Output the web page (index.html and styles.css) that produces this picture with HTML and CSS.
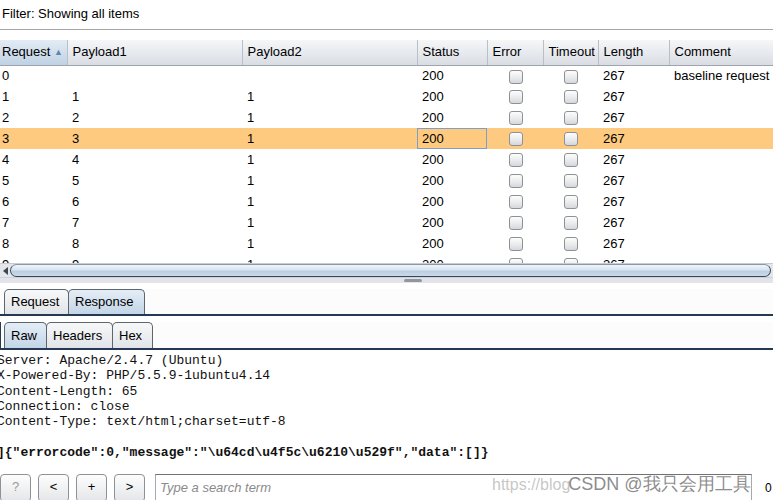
FILE: index.html
```html
<!DOCTYPE html>
<html>
<head>
<meta charset="utf-8">
<link rel="stylesheet" href="styles.css">
</head>
<body>
<div class="page">
  <div class="filter">Filter: Showing all items</div>
  <div class="grid-wrap">
    <table class="grid">
      <colgroup>
        <col class="c-req"><col class="c-p1"><col class="c-p2"><col class="c-st"><col class="c-err"><col class="c-to"><col class="c-len"><col class="c-com">
      </colgroup>
      <thead>
        <tr>
          <th class="sorted">Request <span class="sort-arrow">▲</span></th>
          <th>Payload1</th><th>Payload2</th><th>Status</th><th>Error</th><th>Timeout</th><th>Length</th><th>Comment</th>
        </tr>
      </thead>
      <tbody>
        <tr><td class="first">0</td><td></td><td></td><td>200</td><td class="cb"><span class="box"></span></td><td class="cb"><span class="box"></span></td><td>267</td><td>baseline request</td></tr>
        <tr><td class="first">1</td><td>1</td><td>1</td><td>200</td><td class="cb"><span class="box"></span></td><td class="cb"><span class="box"></span></td><td>267</td><td></td></tr>
        <tr><td class="first">2</td><td>2</td><td>1</td><td>200</td><td class="cb"><span class="box"></span></td><td class="cb"><span class="box"></span></td><td>267</td><td></td></tr>
        <tr class="sel"><td class="first">3</td><td>3</td><td>1</td><td class="focus">200</td><td class="cb"><span class="box"></span></td><td class="cb"><span class="box"></span></td><td>267</td><td></td></tr>
        <tr><td class="first">4</td><td>4</td><td>1</td><td>200</td><td class="cb"><span class="box"></span></td><td class="cb"><span class="box"></span></td><td>267</td><td></td></tr>
        <tr><td class="first">5</td><td>5</td><td>1</td><td>200</td><td class="cb"><span class="box"></span></td><td class="cb"><span class="box"></span></td><td>267</td><td></td></tr>
        <tr><td class="first">6</td><td>6</td><td>1</td><td>200</td><td class="cb"><span class="box"></span></td><td class="cb"><span class="box"></span></td><td>267</td><td></td></tr>
        <tr><td class="first">7</td><td>7</td><td>1</td><td>200</td><td class="cb"><span class="box"></span></td><td class="cb"><span class="box"></span></td><td>267</td><td></td></tr>
        <tr><td class="first">8</td><td>8</td><td>1</td><td>200</td><td class="cb"><span class="box"></span></td><td class="cb"><span class="box"></span></td><td>267</td><td></td></tr>
        <tr><td class="first">9</td><td>9</td><td>1</td><td>200</td><td class="cb"><span class="box"></span></td><td class="cb"><span class="box"></span></td><td>267</td><td></td></tr>
      </tbody>
    </table>
  </div>
  <div class="hscroll">
    <div class="arrow-btn"><span class="tri-left"></span></div>
    <div class="thumb"></div>
  </div>
  <div class="splitter"><span class="grip"></span></div>
  <div class="tabs outer">
    <div class="tab">Request</div>
    <div class="tab active">Response</div>
  </div>
  <div class="tabs inner">
    <div class="tab active">Raw</div>
    <div class="tab">Headers</div>
    <div class="tab">Hex</div>
  </div>
  <pre class="raw">Server: Apache/2.4.7 (Ubuntu)
X-Powered-By: PHP/5.5.9-1ubuntu4.14
Content-Length: 65
Connection: close
Content-Type: text/html;charset=utf-8

<b>]{"errorcode":0,"message":"\u64cd\u4f5c\u6210\u529f","data":[]}</b></pre>
  <div class="bottom">
    <button class="btn disabled">?</button>
    <button class="btn">&lt;</button>
    <button class="btn">+</button>
    <button class="btn">&gt;</button>
    <div class="search">Type a search term</div>
    <div class="count">0</div>
  </div>
  <div class="watermark"><span class="wm-url">https://blog</span><span class="wm-name">CSDN @我只会用工具</span></div>
</div>
</body>
</html>
```

FILE: styles.css
```css
* { box-sizing: border-box; }
html, body { margin: 0; padding: 0; background: #fff; }
.page {
  width: 773px;
  height: 500px;
  overflow: hidden;
  position: relative;
  display: flex;
  flex-direction: column;
  font-family: "Liberation Sans", Arial, sans-serif;
  font-size: 13px;
  color: #000;
}
.filter {
  height: 30px;
  flex: none;
  padding: 6px 0 0 2px;
  border-bottom: 1px solid #a7a7a7;
  background: #fff;
}
.grid-wrap {
  flex: none;
  height: 223px;
  margin-top: 10px;
  overflow: hidden;
}
.grid {
  width: 773px;
  table-layout: fixed;
  border-collapse: collapse;
}
.c-req { width: 67px; }
.c-p1 { width: 175px; }
.c-p2 { width: 175px; }
.c-st { width: 70px; }
.c-err { width: 56px; }
.c-to { width: 55px; }
.c-len { width: 71px; }
.c-com { width: 104px; }
.grid th {
  height: 25px;
  padding: 0 0 1px 5px;
  text-align: left;
  font-weight: normal;
  white-space: nowrap;
  background: linear-gradient(#f5f6f8, #e4e7ec 60%, #d9dde3);
  border-right: 1px solid #b9bfc8;
  border-bottom: 1px solid #9da4ad;
}
.grid th:last-child { border-right: none; }
.grid th.sorted {
  padding-left: 2px;
  background: linear-gradient(#e3ecf5, #cddcea 60%, #bfd1e3);
}
.sort-arrow { font-size: 9px; color: #5b86b4; vertical-align: 1px; }
.grid td {
  height: 21px;
  padding: 0 0 0 5px;
  white-space: nowrap;
  overflow: hidden;
}
.grid td.first { padding-left: 2px; }
.grid td.cb { padding: 0; text-align: center; }
.grid tr.sel td { background: #fdca80; }
.grid td.focus { box-shadow: inset 0 0 0 1px #7a9fcc; }
.box {
  display: inline-block;
  width: 14px;
  height: 14px;
  vertical-align: middle;
  border: 1px solid #8e9298;
  border-radius: 3px;
  background: linear-gradient(#fdfdfd, #e9eaec 55%, #d5d7db);
  margin-left: 1px;
}
.hscroll {
  flex: none;
  height: 14px;
  display: flex;
  background: #e3e6ea;
  border-top: 1px solid #c8ccd2;
}
.arrow-btn {
  width: 10px;
  display: flex;
  align-items: center;
  justify-content: center;
}
.tri-left {
  width: 0; height: 0;
  border-top: 4px solid transparent;
  border-bottom: 4px solid transparent;
  border-right: 5px solid #3e4650;
}
.thumb {
  flex: 1;
  margin-right: 2px;
  border: 1px solid #3a4856;
  border-top-color: #8a97a6;
  border-radius: 7px;
  background: linear-gradient(#eef4fa, #d7e4f0 45%, #bccfe2 55%, #c9d9e8);
}
.splitter {
  flex: none;
  height: 6px;
  background: #e2e4ea;
  border-top: 1px solid #cfd2d8;
  display: flex;
  justify-content: center;
  align-items: center;
}
.grip {
  width: 18px;
  height: 3px;
  margin-left: 52px;
  background: #8f98a2;
  border-radius: 2px;
}
.tabs {
  flex: none;
  display: flex;
  padding-left: 4px;
  border-bottom: 2px solid #253a52;
  background: #fcfcfc;
}
.tabs.outer { margin-top: 6px; height: 27px; }
.tabs.inner { margin-top: 6px; height: 28px; border-left: 1px solid #253a52; padding-left: 3px; }
.tab {
  height: 26px;
  padding: 5px 6px 0 6px;
  border: 1px solid #5c6670;
  border-bottom: none;
  border-radius: 5px 5px 0 0;
  background: linear-gradient(#f7f8f9, #e1e4e8);
  margin-right: -1px;
  font-size: 13px;
  align-self: flex-end;
}
.tab.active {
  background: linear-gradient(#e4edf6, #c3d5e7);
}
.outer .tab { height: 25px; padding-top: 4px; }
.outer .tab:first-child { width: 65px; }
.outer .tab.active { width: 77px; }
.inner .tab { height: 26px; }
.inner .tab:nth-child(1) { width: 43px; }
.inner .tab:nth-child(2) { width: 67px; }
.inner .tab:nth-child(3) { width: 41px; }
.raw {
  flex: 1;
  margin: 0 0 0 -3px;
  padding: 3px 0 0 0;
  font-family: "Liberation Mono", "Courier New", monospace;
  font-size: 13px;
  line-height: 15.35px;
  color: #111;
  overflow: hidden;
}
.raw b { font-weight: bold; }
.bottom {
  flex: none;
  height: 26px;
  display: flex;
  align-items: flex-start;
  gap: 7px;
  padding-left: 0;
}
.btn {
  width: 31px;
  height: 28px;
  padding: 0 0 4px 0;
  border: 1px solid #8d9298;
  border-radius: 4px;
  background: linear-gradient(#fdfdfd, #e4e6e9);
  font-family: "Liberation Sans", Arial, sans-serif;
  font-size: 13px;
  color: #000;
}
.btn.disabled { color: #9a9a9a; }
.search {
  margin-left: 3px;
  width: 597px;
  height: 28px;
  border: 1px solid #a6a9ad;
  border-top-color: #6f7378;
  padding: 5px 0 0 4px;
  font-style: italic;
  color: #8a8a8a;
  font-size: 13px;
}
.count {
  margin-left: 6px;
  padding-top: 7px;
  font-size: 12px;
}
.watermark {
  position: absolute;
  left: 492px;
  top: 472px;
  display: flex;
  align-items: baseline;
  white-space: nowrap;
  pointer-events: none;
}
.wm-url {
  font-size: 16px;
  color: rgba(150,150,150,0.55);
}
.wm-name {
  margin-left: -2px;
  font-size: 18px;
  color: rgba(110,110,110,0.8);
}
```
